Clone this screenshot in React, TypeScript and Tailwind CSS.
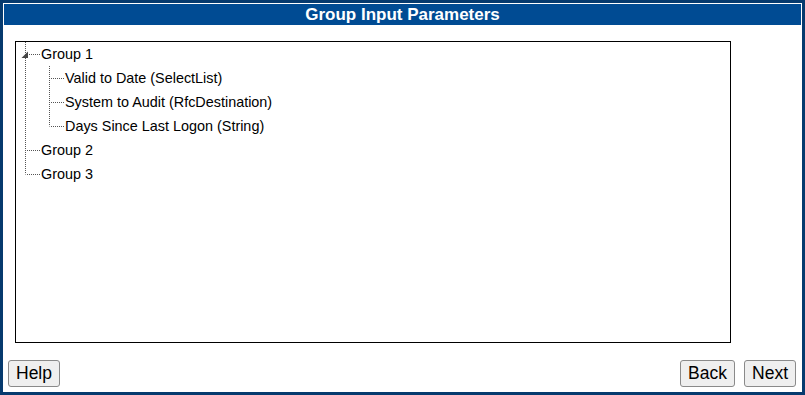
import React from "react";

type Piece = "full" | "half" | "none";

interface Row {
  label: string;
  level: number;
  // connector per gutter column
  cols: { line: Piece; branch: boolean; toggle?: boolean }[];
}

const rows: Row[] = [
  { label: "Group 1", level: 0, cols: [{ line: "full", branch: true, toggle: true }] },
  {
    label: "Valid to Date (SelectList)",
    level: 1,
    cols: [{ line: "full", branch: false }, { line: "full", branch: true }],
  },
  {
    label: "System to Audit (RfcDestination)",
    level: 1,
    cols: [{ line: "full", branch: false }, { line: "full", branch: true }],
  },
  {
    label: "Days Since Last Logon (String)",
    level: 1,
    cols: [{ line: "full", branch: false }, { line: "half", branch: true }],
  },
  { label: "Group 2", level: 0, cols: [{ line: "full", branch: true }] },
  { label: "Group 3", level: 0, cols: [{ line: "half", branch: true }] },
];

function Gutter({ line, branch, toggle }: { line: Piece; branch: boolean; toggle?: boolean }) {
  return (
    <svg width="24" height="24" viewBox="0 0 24 24" className="shrink-0">
      {line !== "none" && (
        <line
          x1="9.5"
          y1="0"
          x2="9.5"
          y2={line === "full" ? 24 : 12.5}
          stroke="#555"
          strokeWidth="1"
          strokeDasharray="1 1"
        />
      )}
      {branch && (
        <line x1="11" y1="12.5" x2="24" y2="12.5" stroke="#555" strokeWidth="1" strokeDasharray="1 1" />
      )}
      {toggle && <polygon points="12,9.5 12,16 5.5,16" fill="#444" />}
    </svg>
  );
}

function Button({ children }: { children: React.ReactNode }) {
  return (
    <button className="h-[27px] rounded-[3px] border border-[#8a8a8a] bg-[#efefef] px-[7px] text-[17.5px] leading-none text-black">
      {children}
    </button>
  );
}

export default function App() {
  return (
    <div
      className="flex h-[395px] w-[805px] flex-col border-[3px] border-[#063a6e] bg-white p-[1px]"
      style={{ fontFamily: '"Liberation Sans", Arial, sans-serif' }}
    >
      <div className="flex h-[21px] items-center justify-center bg-[#004b93] text-[17px] font-bold text-white">
        Group Input Parameters
      </div>

      <div className="ml-[11px] mt-[16px] h-[302px] w-[716px] border border-black bg-white">
        {rows.map((r) => (
          <div key={r.label} className="flex h-[24px] items-center">
            {r.cols.map((c, i) => (
              <Gutter key={i} {...c} />
            ))}
            <span className="ml-[1px] pt-[2px] text-[14.4px] text-black">{r.label}</span>
          </div>
        ))}
      </div>

      <div className="mt-[17px] flex items-center pl-[4px] pr-[5px]">
        <Button>Help</Button>
        <div className="flex-1" />
        <div className="flex gap-[9px]">
          <Button>Back</Button>
          <Button>Next</Button>
        </div>
      </div>
    </div>
  );
}
